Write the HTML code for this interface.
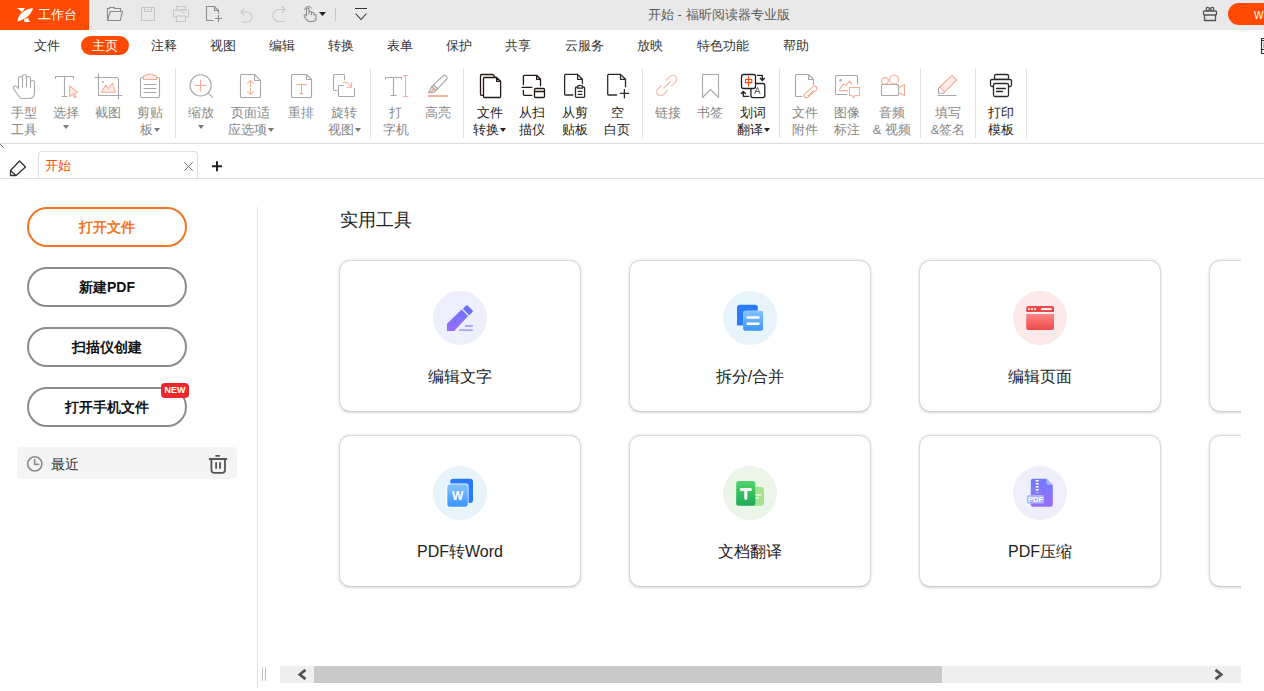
<!DOCTYPE html>
<html><head><meta charset="utf-8">
<style>
*{margin:0;padding:0;box-sizing:border-box}
html,body{width:1264px;height:691px;overflow:hidden;background:#fff;font-family:"Liberation Sans",sans-serif;color:#333}
.a{position:absolute}
#title{left:0;top:0;width:1264px;height:30px;background:#e9e9e9}
#ws{left:0;top:0;width:89px;height:30px;background:#ff4a00;color:#fff;font-size:13px}
#menu{left:0;top:30px;width:1264px;height:30px;background:#fff}
.m{position:absolute;top:36px;font-size:13px;line-height:19px;color:#333}
#pill{left:81px;top:36px;width:48px;height:19px;border-radius:10px;background:#ff4a00;color:#fff;text-align:center}
.rl{position:absolute;font-size:13px;line-height:17px;text-align:center;color:#878787;white-space:nowrap}
.dk{color:#222}
.sep{position:absolute;top:68px;width:1px;height:70px;background:#e0e0e0}



.tri{display:inline-block;width:0;height:0;border-left:3.5px solid transparent;border-right:3.5px solid transparent;border-top:4px solid #777;vertical-align:middle;margin-left:1px;position:relative;top:-1px}
.dk .tri{border-top-color:#222}
.tb{margin:0;top:-4px}
#rbline{left:0;top:143px;width:1264px;height:1px;background:#dcdcdc}

.lb{position:absolute;left:27px;width:160px;height:40px;border:2px solid #8c8c8c;border-radius:20px;font-size:14px;font-weight:bold;text-align:center;line-height:36px;color:#111}
.card{position:absolute;width:240px;height:150px;border-radius:10px;box-shadow:0 0 0 1px rgba(0,0,0,.06),0 0.5px 3px 1px rgba(0,0,0,.13),0 1px 3px rgba(0,0,0,.06);background:#fff}
.card .t{position:absolute;left:0;width:100%;top:106px;text-align:center;font-size:16px;line-height:20px;color:#222}
</style></head><body>
<div id="title" class="a"></div>
<div id="ws" class="a"></div>
<div id="menu" class="a"></div>
<div class="a" style="left:38px;top:6px;font-size:13px;line-height:18px;color:#fff">工作台</div>
<div class="a" style="left:648px;top:6px;font-size:13px;line-height:18px;color:#5a5a5a">开始 - 福昕阅读器专业版</div>
<div class="a" style="left:1228px;top:3px;width:60px;height:22px;border-radius:11px;background:#ff4a00"></div>
<div class="a" style="left:1254px;top:10px;font-size:10px;line-height:12px;color:#fff">W3</div>

<span class="m" style="left:34px">文件</span>
<span class="m a" id="pill">主页</span>
<span class="m" style="left:151px">注释</span>
<span class="m" style="left:210px">视图</span>
<span class="m" style="left:269px">编辑</span>
<span class="m" style="left:328px">转换</span>
<span class="m" style="left:387px">表单</span>
<span class="m" style="left:446px">保护</span>
<span class="m" style="left:505px">共享</span>
<span class="m" style="left:565px">云服务</span>
<span class="m" style="left:637px">放映</span>
<span class="m" style="left:697px">特色功能</span>
<span class="m" style="left:783px">帮助</span>
<div id="rbline" class="a"></div>
<div class="rl" style="left:-16.0px;top:104px;width:80px">手型<br>工具</div>
<div class="rl" style="left:26.0px;top:104px;width:80px">选择<br><i class="tri tb"></i></div>
<div class="rl" style="left:67.5px;top:104px;width:80px">截图<br></div>
<div class="rl" style="left:110.0px;top:104px;width:80px">剪贴<br>板<i class="tri"></i></div>
<div class="rl" style="left:161.0px;top:104px;width:80px">缩放<br><i class="tri tb"></i></div>
<div class="rl" style="left:210.5px;top:104px;width:80px">页面适<br>应选项<i class="tri"></i></div>
<div class="rl" style="left:261.0px;top:104px;width:80px">重排<br></div>
<div class="rl" style="left:304.0px;top:104px;width:80px">旋转<br>视图<i class="tri"></i></div>
<div class="rl" style="left:355.5px;top:104px;width:80px">打<br>字机</div>
<div class="rl" style="left:398.0px;top:104px;width:80px">高亮<br></div>
<div class="rl dk" style="left:449.6px;top:104px;width:80px">文件<br>转换<i class="tri"></i></div>
<div class="rl dk" style="left:492.0px;top:104px;width:80px">从扫<br>描仪</div>
<div class="rl dk" style="left:535.0px;top:104px;width:80px">从剪<br>贴板</div>
<div class="rl dk" style="left:577.0px;top:104px;width:80px">空<br>白页</div>
<div class="rl" style="left:627.6px;top:104px;width:80px">链接<br></div>
<div class="rl" style="left:670.0px;top:104px;width:80px">书签<br></div>
<div class="rl dk" style="left:713.0px;top:104px;width:80px">划词<br>翻译<i class="tri"></i></div>
<div class="rl" style="left:765.0px;top:104px;width:80px">文件<br>附件</div>
<div class="rl" style="left:807.0px;top:104px;width:80px">图像<br>标注</div>
<div class="rl" style="left:852.0px;top:104px;width:80px">音频<br>&amp; 视频</div>
<div class="rl" style="left:908.0px;top:104px;width:80px">填写<br>&amp;签名</div>
<div class="rl dk" style="left:961.0px;top:104px;width:80px">打印<br>模板</div>
<div class="sep" style="left:175px"></div>
<div class="sep" style="left:370px"></div>
<div class="sep" style="left:463px"></div>
<div class="sep" style="left:642px"></div>
<div class="sep" style="left:779px"></div>
<div class="sep" style="left:920px"></div>
<div class="sep" style="left:975px"></div>
<div class="sep" style="left:1026px"></div>

<!-- tab bar -->
<div class="a" style="left:38px;top:151px;width:160px;height:28px;border:1px solid #dedede;border-bottom:none;border-radius:4px 4px 0 0;background:#fff"></div>
<div class="a" style="left:0;top:178px;width:1264px;height:1px;background:#dedede"></div>
<div class="a" style="left:45px;top:156px;font-size:13px;line-height:20px;color:#ff4a00">开始</div>
<!-- left panel -->
<div class="lb" style="top:207px;border-color:#f47522;color:#f47522">打开文件</div>
<div class="lb" style="top:267px">新建PDF</div>
<div class="lb" style="top:327px">扫描仪创建</div>
<div class="lb" style="top:387px">打开手机文件</div>
<div class="a" style="left:161px;top:383px;width:28px;height:15px;border-radius:4px;background:#f0262d;color:#fff;font-size:9px;font-weight:bold;line-height:15px;text-align:center">NEW</div>
<div class="a" style="left:17px;top:447px;width:220px;height:32px;border-radius:4px;background:#f4f4f4"></div>
<div class="a" style="left:51px;top:454px;font-size:14px;line-height:20px;color:#333">最近</div>
<div class="a" style="left:257px;top:207px;width:1px;height:481px;background:#e2e2e2"></div>
<!-- content -->
<div class="a" style="left:340px;top:208px;font-size:18px;line-height:24px;color:#222">实用工具</div>
<div class="card" style="left:340px;top:261px"><div class="t">编辑文字</div></div>
<div class="card" style="left:630px;top:261px"><div class="t">拆分/合并</div></div>
<div class="card" style="left:920px;top:261px"><div class="t">编辑页面</div></div>
<div class="card" style="left:1210px;top:261px"></div>
<div class="card" style="left:340px;top:436px"><div class="t">PDF转Word</div></div>
<div class="card" style="left:630px;top:436px"><div class="t">文档翻译</div></div>
<div class="card" style="left:920px;top:436px"><div class="t">PDF压缩</div></div>
<div class="card" style="left:1210px;top:436px"></div>
<div id="cardicons"><svg class="a" style="left:0;top:0" width="1264" height="691" viewBox="0 0 1264 691">
<defs>
<linearGradient id="gp" x1="0" y1="0" x2="0" y2="1"><stop offset="0" stop-color="#6f72ff"/><stop offset="1" stop-color="#9b6cf6"/></linearGradient>
<linearGradient id="gb" x1="0" y1="0" x2="0" y2="1"><stop offset="0" stop-color="#86c3ff"/><stop offset="1" stop-color="#3a95ff"/></linearGradient>
<linearGradient id="gr" x1="0" y1="0" x2="0" y2="1"><stop offset="0" stop-color="#fb8585"/><stop offset="1" stop-color="#ee4a4a"/></linearGradient>
<linearGradient id="gg" x1="0" y1="0" x2="0" y2="1"><stop offset="0" stop-color="#55d36d"/><stop offset="1" stop-color="#1caa55"/></linearGradient>
<linearGradient id="gz" x1="0" y1="0" x2="0" y2="1"><stop offset="0" stop-color="#6f7bff"/><stop offset="1" stop-color="#9a6ef8"/></linearGradient>
</defs>
<!-- card1 edit text -->
<circle cx="460" cy="318" r="27" fill="#eeeffd"/>
<path d="M447,331 V323.7 L461.6,309.5 L468.1,316 L454.3,331 Z" fill="url(#gp)"/>
<path d="M462.8,309 L466,305.6 Q466.8,304.8 467.6,305.6 L472.6,310.4 Q473.3,311.2 472.5,312 L469.3,315.3 Z" fill="#6b70f8"/>
<path d="M465,325 H472.8 V327 H465 Z M459,329.2 H472.8 V331 H459 Z" fill="#a3aafb"/>
<!-- card2 split -->
<circle cx="750" cy="318" r="27" fill="#e7f4fc"/>
<path d="M737,325.6 V307.7 Q737,304.7 740,304.7 H755 Q757.8,304.7 757.8,307.5 V310.8 H746 Q743.1,310.8 743.1,313.7 V325.6 Z" fill="#2a7cff"/>
<rect x="743.1" y="310.8" width="20" height="20" rx="2" fill="url(#gb)"/>
<path d="M747.5,317.5 H758.5 M747.5,323.8 H758.5" stroke="#fff" stroke-width="2.4" stroke-linecap="round"/>
<!-- card3 edit page -->
<circle cx="1040" cy="318" r="27" fill="#fce9ea"/>
<path d="M1026.2,312 V308 Q1026.2,306.1 1028.2,306.1 H1052 Q1054,306.1 1054,308 V312 Z" fill="#e94b4b"/>
<rect x="1028.2" y="308.2" width="1.6" height="1.8" fill="#fff"/>
<rect x="1031.2" y="308.2" width="1.6" height="1.8" fill="#fff"/>
<rect x="1034.2" y="308.2" width="1.6" height="1.8" fill="#fff"/>
<rect x="1041.2" y="308.2" width="10.4" height="1.8" fill="#fff"/>
<path d="M1026.2,314 H1054 V328 Q1054,330 1052,330 H1028.2 Q1026.2,330 1026.2,328 Z" fill="url(#gr)"/>
<!-- card4 pdf to word -->
<circle cx="460" cy="493" r="27" fill="#e7f4fc"/>
<path d="M453.3,478.8 H470 Q473,478.8 473,481.8 V500 Q473,502.9 470,502.9 H468 V487 Q468,484.1 465,484.1 H450.2 V481.8 Q450.2,478.8 453.3,478.8 Z" fill="#2a7cff"/>
<rect x="446.5" y="483.6" width="22" height="23.9" rx="2.8" fill="#fff"/>
<rect x="447.3" y="484.3" width="20.5" height="22.5" rx="2.4" fill="url(#gb)"/>
<text x="457.6" y="500.3" font-family="Liberation Sans" font-weight="bold" font-size="12" fill="#fff" text-anchor="middle">W</text>
<!-- card5 translate -->
<circle cx="750" cy="493" r="27" fill="#ebf6e9"/>
<rect x="750" y="486.9" width="14" height="18.9" rx="2.5" fill="#a7e290"/>
<rect x="736.2" y="480.9" width="19.1" height="24.9" rx="2.5" fill="url(#gg)"/>
<path d="M741.3,489.6 H750.4 M745.8,489.6 V498.3" stroke="#fff" stroke-width="3" stroke-linecap="round"/>
<path d="M756,494.8 H761 M756,497.8 H758.6" stroke="#fff" stroke-width="1.2" stroke-linecap="round"/>
<!-- card6 compress -->
<circle cx="1040" cy="493" r="27" fill="#efeffc"/>
<path d="M1032.8,478.8 H1046.4 L1052.8,485 V504.7 Q1052.8,506.7 1050.8,506.7 H1032.8 Q1030.8,506.7 1030.8,504.7 V480.8 Q1030.8,478.8 1032.8,478.8 Z" fill="url(#gz)"/>
<path d="M1046.4,478.8 L1052.8,485 H1048.4 Q1046.4,485 1046.4,483 Z" fill="#a9b1ff"/>
<path d="M1037.2,480 V492.5" stroke="#fff" stroke-width="3" stroke-dasharray="1.5 1.5"/>
<rect x="1027" y="495" width="17" height="8.6" rx="1.5" fill="#aab4ff"/>
<text x="1035.5" y="502.4" font-family="Liberation Sans" font-weight="bold" font-size="7.5" fill="#fff" text-anchor="middle">PDF</text>
</svg>
</div>
<div class="a" style="left:1241px;top:179px;width:23px;height:512px;background:#fff"></div>
<!-- scrollbar -->
<div class="a" style="left:280px;top:666px;width:961px;height:17px;background:#efefef"></div>
<div class="a" style="left:314px;top:666px;width:628px;height:17px;background:#c9c9c9"></div>
<div id="svgicons"><svg class="a" style="left:0;top:0" width="1264" height="691" viewBox="0 0 1264 691">
<g fill="none" stroke-linecap="round" stroke-linejoin="round">
<!-- title bar logo -->
<path d="M17,8 L25,8 L22,12 Z" fill="#fff" stroke="none"/>
<path d="M17.5,21.5 C18,15 23,9.5 33,8 C31,15 26,19 17.5,21.5 Z" fill="#fff" stroke="none"/>
<path d="M24,19 L28,18 L30,22 L24.5,22 Z" fill="#fff" stroke="none"/>
<!-- title icons -->
<g stroke="#8a8a8a" stroke-width="1.1">
<path d="M107.5,20.5 V8.5 H109.5 V7.5 H114.5 V8.5 H120.5 V11.5 M107.5,20.5 L110.3,11.5 H122.5 L120.3,20.5 Z" stroke-linecap="butt" stroke-linejoin="miter"/>
</g>
<g stroke="#c6c6c6" stroke-width="1.1">
<rect x="141.5" y="7.5" width="13" height="13"/>
<path d="M144.5,7.5 V11.5 H151.5 V7.5 M147,9.5 H148.5"/>
<rect x="176.5" y="6.5" width="9" height="3.5"/>
<rect x="173.5" y="10" width="15" height="7"/>
<rect x="176.5" y="16" width="9" height="5.5" fill="#e9e9e9"/>
<path d="M182,12.5 H184.5"/>
</g>
<g stroke="#8a8a8a" stroke-width="1.1">
<path d="M213.5,20.5 H206.5 V6.5 H214.5 L218.5,10.5 V13.5 M214.5,6.5 V10.5 H218.5 M215,18.5 H222 M218.5,15 V22" stroke-linecap="butt" stroke-linejoin="miter"/>
</g>
<g stroke="#c8c8c8" stroke-width="1.1">
<path d="M241,12 L244,9 M241,12 L244,15 M241,12 H247 A5,5 0 0 1 247,22 H242"/>
<path d="M285,9.5 L282,6.5 M285,9.5 L282,12.5 M285,9.5 H279 A6,6 0 0 0 279,21.5 H284.5"/>
</g>
<path d="M306.5,16 V9 A1.3,1.3 0 0 1 309,9 V14 V12.5 A1.2,1.2 0 0 1 311.5,12.5 V14.5 V13.5 A1.2,1.2 0 0 1 314,13.5 V15 A1.2,1.2 0 0 1 316,15 V18.5 Q316,21.5 312,21.5 H310 Q308,21.5 306.5,19.5 L304.2,16.5 A1.2,1.2 0 0 1 306.5,15.5" stroke="#8a8a8a" stroke-width="1.1"/>
<path d="M304.5,9.5 A4,4 0 0 1 311.5,8" stroke="#8a8a8a" stroke-width="1"/>
<path d="M319,12 H326 L322.5,16 Z" fill="#222" stroke="none"/>
<path d="M335.5,8 V21" stroke="#c8c8c8" stroke-width="1"/>
<path d="M355,8.5 H367 M355.5,13.5 L361,19.5 L366.5,13.5" stroke="#333" stroke-width="1.1" stroke-linecap="butt"/>
<!-- gift -->
<g stroke="#555" stroke-width="1.3">
<rect x="1203.5" y="11" width="13" height="4" rx="1"/>
<path d="M1204.5,15 V20.5 H1215.5 V15"/>
<circle cx="1207.8" cy="9" r="1.6"/><circle cx="1212.2" cy="9" r="1.6"/>
</g>
<!-- menu right icon -->
<g stroke="#333" stroke-width="1.2" stroke-linecap="butt"><path d="M1264,38.5 H1261.5 V53.5 H1264 M1261.5,40.5 H1264 M1261.5,49.5 H1264"/></g>
<rect x="1263" y="42" width="1" height="6" fill="#f7a090"/>

<!-- RIBBON -->
<g stroke="#a8a8a8" stroke-width="1.1">
<!-- hand -->
<path d="M18.5,88.5 V78.5 A2,2 0 0 1 22.5,78.5 V87 M22.5,87 V76.5 A2,2 0 0 1 26.5,76.5 V87 M26.5,87 V78.5 A2,2 0 0 1 30.5,78.5 V87.5 M30.5,87.5 V82.5 A2,2 0 0 1 34.5,82.5 V92.5 Q34.5,98.5 29.5,98.5 H22 Q20.5,98.5 19,96.5 L13.8,89 A1.9,1.9 0 0 1 16.8,86.6 L18.5,88.5"/>
<!-- select T -->
<path d="M55.5,78.5 V76.5 H73.5 V78.5 M64.5,76.5 V96.5 M62,96.5 H67"/>
<!-- crop -->
<path d="M98.5,74 V95.5 H122 M95,77.5 H117 Q118.5,77.5 118.5,79 V98.8"/>
<!-- clipboard -->
<rect x="140.5" y="77.5" width="19" height="20" rx="1.5"/>
<path d="M144,84.5 H156 M144,88.5 H156 M144,92.5 H156"/>
<!-- zoom -->
<circle cx="200.6" cy="85.4" r="10.6"/>
<path d="M208.6,93.4 L212.6,97.4"/>
<!-- page fit -->
<path d="M254.5,74.5 H241.5 Q240.5,74.5 240.5,75.5 V96.5 Q240.5,97.5 241.5,97.5 H259.5 Q260.5,97.5 260.5,96.5 V80.5 L254.5,74.5 V80.5 H260.5"/>
<!-- reflow -->
<path d="M306.5,74.5 H292.5 Q291.5,74.5 291.5,75.5 V96.5 Q291.5,97.5 292.5,97.5 H310.5 Q311.5,97.5 311.5,96.5 V79.5 L306.5,74.5 V79.5 H311.5"/>
<!-- rotate -->
<path d="M336.8,90.5 H334.5 Q333.5,90.5 333.5,89.5 V75.5 Q333.5,74.5 334.5,74.5 H343.5 Q344.5,74.5 344.5,75.5 V79.8"/>
<path d="M343.5,85.5 H339.5 Q338.5,85.5 338.5,86.5 V95.5 Q338.5,96.5 339.5,96.5 H353.5 Q354.5,96.5 354.5,95.5 V88.5"/>
<!-- typewriter T -->
<path d="M385.5,79 V77.5 H401.5 V79 M393.5,77.5 V95.5 M391,95.5 H396"/>
<!-- highlighter -->
<path d="M443.5,75.5 Q444.5,74.8 445.5,75.5 L447,77.2 Q447.5,78.2 446.8,79 L437.5,88.8 L433.5,84.8 Z"/>
<path d="M433.5,84.8 L437.5,88.8 L435.8,90.6 L431.8,86.6 Z"/>
<path d="M431.8,86.6 L435.8,90.6 L433.5,92.5 L428.5,92.6 Z"/>
<!-- bookmark -->
<path d="M702.5,97.5 V74.5 H718.5 V97.5 L710.5,89.5 Z"/>
<!-- file attach -->
<path d="M801.7,96.5 H796.5 Q795.5,96.5 795.5,95.5 V75.5 Q795.5,74.5 796.5,74.5 H808.5 L813.5,79.5 V84.8 M808.5,74.5 V79.5 H813.5"/>
<!-- image annot -->
<path d="M846.7,94.5 H836.5 Q835.5,94.5 835.5,93.5 V76.5 Q835.5,75.5 836.5,75.5 H856.5 Q857.5,75.5 857.5,76.5 V83.9"/>
<!-- video body -->
<rect x="881.5" y="84.5" width="17" height="11" rx="1"/>
<!-- fill sign tip and line -->
<path d="M939.8,87 L938.5,88.3 V93.3 H943.7 L944.6,91.8"/>
<path d="M938,95.5 H956"/>
</g>
<circle cx="103" cy="82" r="0.9" fill="#a8a8a8"/>
<circle cx="840.6" cy="80.3" r="1.2" fill="#a8a8a8"/>

<g stroke="#f8ab95" stroke-width="1.05">
<path d="M69.5,86 L77.5,92.2 L74.3,93.2 L76.2,96.8 L74.6,97.8 L72.7,94.2 L69.8,96.6 Z" fill="#fdeee9"/>
<path d="M101.4,92.3 L105.5,85.2 L108.4,88.7 L112.5,83.3 L115.6,92.3 Z" fill="#fdeee9"/>
<path d="M143.5,79.5 V76.5 Q143.5,75.5 144.5,75.5 H146.5 Q146.5,74.2 147.5,74.2 H152.5 Q153.5,74.2 153.5,75.5 H155.5 Q156.5,75.5 156.5,76.5 V79.5 Z" fill="#fdeee9"/>
<path d="M195,85.4 H206 M200.6,79.9 V91"/>
<path d="M250.5,80.5 V86.6 M250.5,88.2 V94.5 M247.5,83.5 L250.5,80.5 L253.5,83.5 M247.5,91.5 L250.5,94.5 L253.5,91.5"/>
<path d="M297,85.5 V84.4 H306 V85.5 M301.5,84.4 V93.6 M300,93.6 H303"/>
<path d="M343.3,82.3 Q348.5,82 351.6,87.2 M351.6,82.5 V87.2 H347"/>
<path d="M405.5,75.5 V96.5 M403.5,75.5 H407.5 M403.5,96.5 H407.5"/>
<!-- link -->
<path d="M666,80.5 L670,76.5 A3.89,3.89 0 0 1 675.5,82 L671.5,86 M661.5,85.5 L657.8,89.2 A3.89,3.89 0 0 0 663.3,94.7 L667.3,90.7 M663.8,88.2 L670.5,81.5"/>
<!-- paperclip -->
<rect x="802.9" y="89.7" width="15.2" height="4.6" rx="2.3" transform="rotate(-40 810.5 92)"/>
<path d="M808.3,95.8 L813.6,90.6" />
<!-- image annot orange -->
<path d="M839.5,89.5 L843.6,83.9 L845.7,85.4 L849.8,81.1 L851.9,84.4 M839.5,90.6 H847.8"/>
<path d="M849.5,87.5 H859.5 V95.5 H855 L853.4,97.6 L852,95.5 H849.5 Z"/>
<!-- video -->
<circle cx="885" cy="80.8" r="3.4"/>
<circle cx="894.2" cy="79.6" r="4.4"/>
<path d="M898.7,87.5 L904.5,84.5 V95.5 L898.7,92.5"/>
<!-- fill sign pencil -->
<path d="M952,75.3 L956.8,80 L944.6,91.8 L939.8,87 Z" fill="#fdeee9"/>
</g>
<path d="M428,96 H447.8" stroke="#f8ab95" stroke-width="1.8" stroke-linecap="butt"/>
<path d="M430,91.5 L433,88.5 L434.5,90 L431.5,92.2 Z" fill="#f8ab95"/>

<!-- dark icons -->
<g stroke="#231815" stroke-width="1.3">
<path d="M483,95.3 H481.5 Q480.5,95.3 480.5,94.3 V75.5 Q480.5,74.5 481.5,74.5 H492.8 L495,77.1"/>
<path d="M496.5,77.5 H484.5 Q483.5,77.5 483.5,78.5 V96.5 Q483.5,97.5 484.5,97.5 H499.6 Q500.6,97.5 500.6,96.5 V81.3 L496.6,77.5 V81.3 H500.6"/>
<path d="M523.4,84.6 V76.3 Q523.4,75.3 524.4,75.3 H536.6 L540.5,79.3 V85.7 M536.6,75.3 V79.3 H540.5"/>
<path d="M522,87.3 H531.8 M523.4,90.3 V94.3 Q523.4,95.3 524.4,95.3 H531.8"/>
<rect x="534.5" y="88.5" width="10" height="9" rx="1.2"/>
<path d="M534.5,91.5 H544.5"/>
</g>
<g stroke="#2b2b2b" stroke-width="1.3">
<path d="M572.8,95 H565.6 Q564.6,95 564.6,94 V75.4 Q564.6,74.4 565.6,74.4 H577.6 L582.4,79.3 V83.5 M577.6,74.4 V79.3 H582.4"/>
<path d="M577.5,87.2 H576.3 Q575.5,87.2 575.5,88 V96.5 Q575.5,97.3 576.3,97.3 H583.8 Q584.6,97.3 584.6,96.5 V88 Q584.6,87.2 583.8,87.2 H582.5"/>
<path d="M577.6,88.2 V86.5 Q577.6,85.3 580,85.3 Q582.6,85.3 582.6,86.5 V88.2 Z"/>
<path d="M578.3,91.4 H581.8 M578.3,94.4 H581.8"/>
<path d="M616.6,95 H608.7 Q607.7,95 607.7,94 V75.4 Q607.7,74.4 608.7,74.4 H620.5 L625.5,79.3 V86.7 M620.5,74.4 V79.3 H625.5"/>
<path d="M620.2,93.4 H628.7 M624.4,89.6 V97.8"/>
</g>
<g stroke="#222" stroke-width="1.3">
<rect x="741.5" y="74.5" width="14" height="14" rx="2"/>
<path d="M755.5,83.5 H762.8 Q764.8,83.5 764.8,85.5 V95.6 Q764.8,97.6 762.8,97.6 H752.9 Q750.9,97.6 750.9,95.6 V88.5"/>
<path d="M757.5,75.4 H762.3 V80.3 M760.3,78.3 L762.3,80.5 L764.4,78.3"/>
<path d="M748.7,96.3 H743.3 V91.6 M741.3,93.5 L743.3,91.5 L745.5,93.5"/>
</g>
<path d="M745.5,79.5 H751.8 V82.6 H745.5 Z M748.6,76.2 V86" stroke="#ff4400" stroke-width="1.05" fill="none"/>
<path d="M754.8,93.6 L757.4,87.4 L760,93.6 M755.7,91.4 H759.1" stroke="#555" stroke-width="0.9" fill="none"/>
<g stroke="#2b2b2b" stroke-width="1.3">
<rect x="994.5" y="74.5" width="14" height="5" rx="1.5"/>
<rect x="990.5" y="79.5" width="21" height="7" rx="1.5" fill="#fff"/>
<rect x="993.5" y="83.5" width="15" height="13" rx="1.5" fill="#fff"/>
<path d="M996.5,88.5 H1005.5 M996.5,91.5 H1002.5"/>
</g>

<!-- tab bar icons -->
<path d="M0.5,144.5 L3,147" stroke="#555" stroke-width="1"/>
<path d="M10.5,175.5 V170.5 L19.5,161 L25.5,167 L16,175.5 Z M10.5,170.5 L16,175.5" stroke="#333" stroke-width="1.3"/>
<path d="M184.5,162.5 L192.5,170.5 M192.5,162.5 L184.5,170.5" stroke="#777" stroke-width="1"/>
<path d="M212,166.3 H222 M217,161.3 V171.3" stroke="#222" stroke-width="2" stroke-linecap="butt"/>

<!-- left panel icons -->
<circle cx="34.8" cy="463.9" r="7.1" stroke="#8a8a8a" stroke-width="1.6"/>
<path d="M34.6,459.6 V464.4 H38.6" stroke="#8a8a8a" stroke-width="1.6"/>
<path d="M209.6,459 H226.4 M216,455.8 H219.4 M211.4,459 V470 Q211.4,472.8 214.2,472.8 H222.2 Q225,472.8 225,470 V459 M216.1,463 V468 M220,463 V468" stroke="#555" stroke-width="1.8"/>

<!-- scrollbar bits -->
<path d="M262.5,667.5 V680.5 M265.5,667.5 V680.5" stroke="#bdbdbd" stroke-width="1"/>
<path d="M305.5,669.8 L299.8,674.5 L305.5,679.2" stroke="#555" stroke-width="2.8" stroke-linecap="butt" stroke-linejoin="miter"/>
<path d="M1215.5,669.8 L1221.2,674.5 L1215.5,679.2" stroke="#555" stroke-width="2.8" stroke-linecap="butt" stroke-linejoin="miter"/>
</g>
</svg>
</div>
</body></html>
